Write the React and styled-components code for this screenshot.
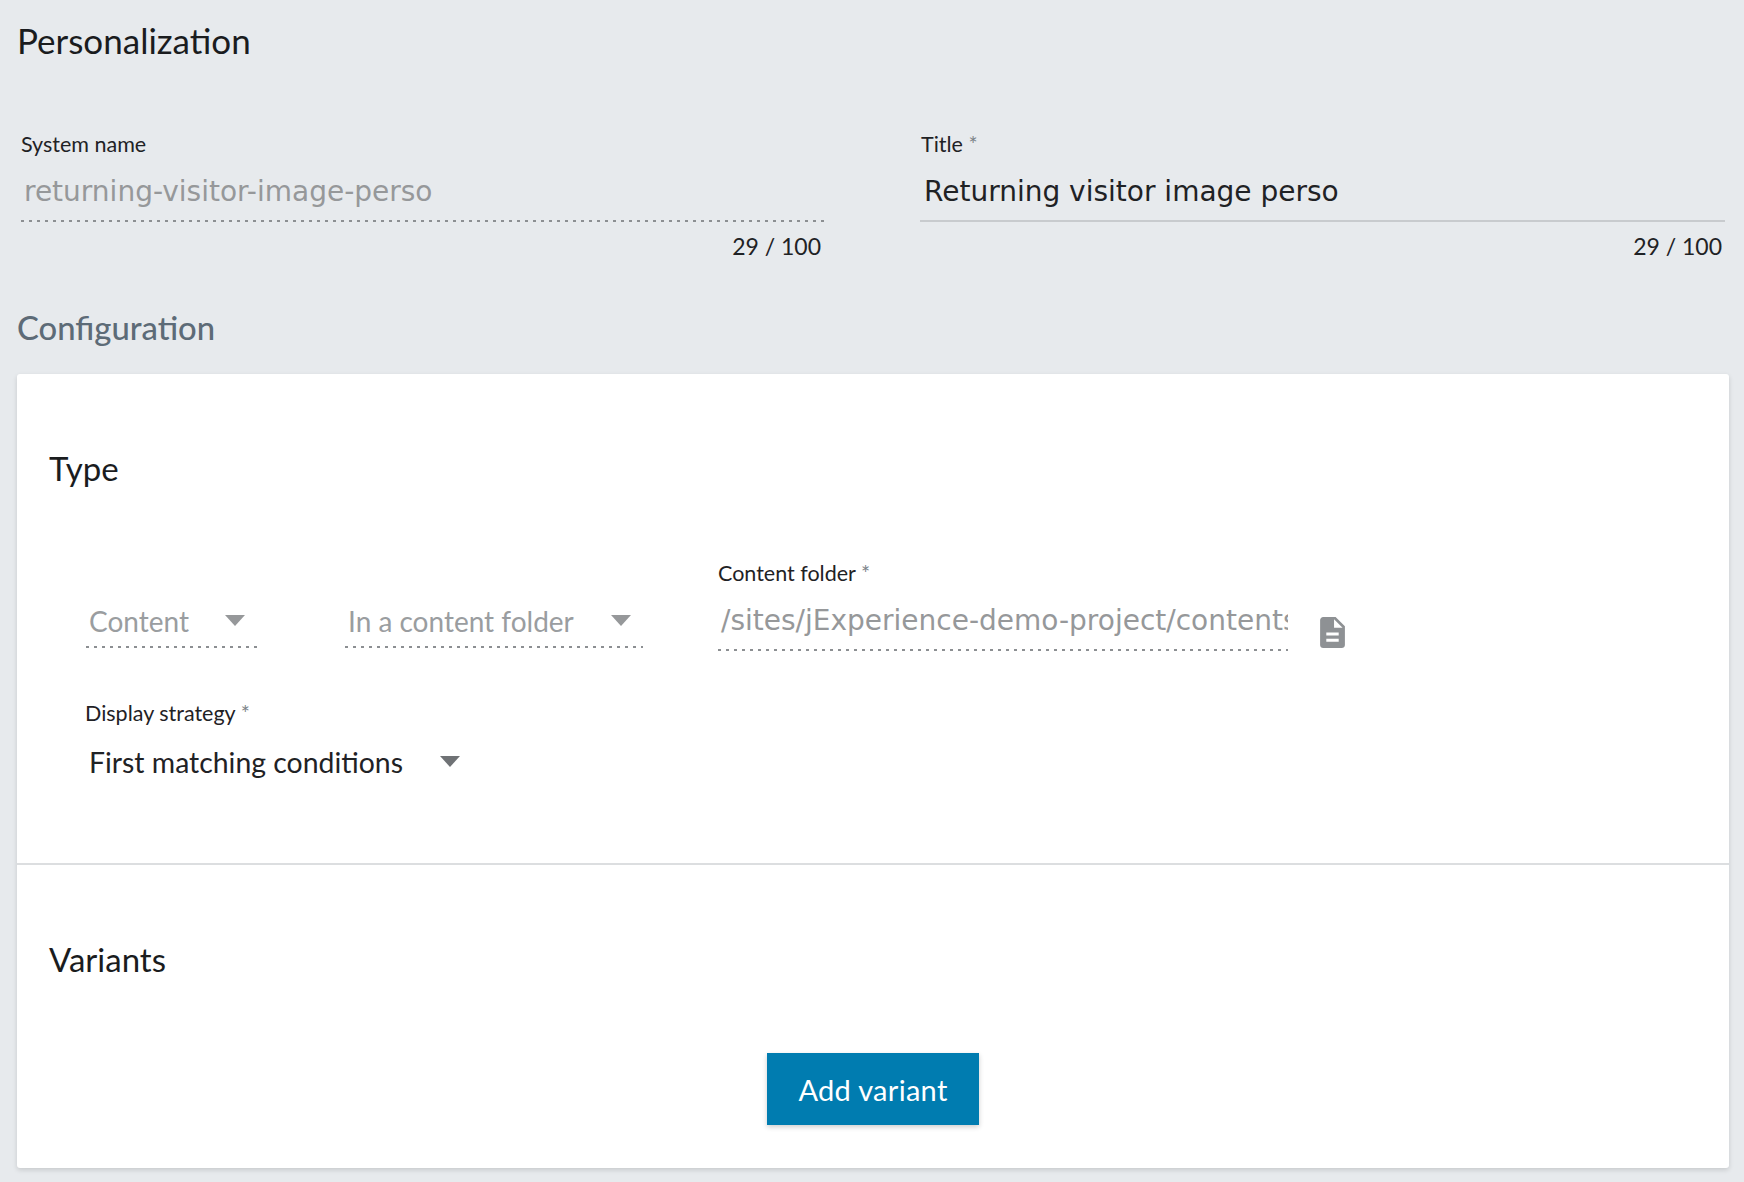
import React from 'react';
import styled, { createGlobalStyle, css } from 'styled-components';

const GlobalStyle = createGlobalStyle`
  html, body {
    margin: 0;
    padding: 0;
    background: #e7eaed;
  }
  body {
    font-family: Lato, "Open Sans", sans-serif;
    color: #1f2225;
  }
`;

const dottedLine = css`
  background-image: linear-gradient(to right, #8c8f92 3px, transparent 3px);
  background-size: 8px 2px;
  background-repeat: repeat-x;
  background-position: 1px bottom;
`;

const solidLine = css`
  background-image: linear-gradient(#c8cbce, #c8cbce);
  background-size: 100% 2px;
  background-repeat: no-repeat;
  background-position: left bottom;
`;

const Page = styled.div`
  width: 1744px;
  height: 1182px;
  box-sizing: border-box;
  padding: 0 15px 14px 17px;
  display: flex;
  flex-direction: column;
  overflow: hidden;
`;

const PageTitle = styled.h1`
  margin: 0;
  height: 81px;
  line-height: 81px;
  font-size: 35px;
  font-weight: 400;
  color: #1a1c1e;
`;

const FieldRow = styled.div`
  display: grid;
  grid-template-columns: 804px 805px;
  column-gap: 96px;
  padding: 50px 0 0 3px;
`;

const Field = styled.div`
  display: flex;
  flex-direction: column;
`;

const Label = styled.label`
  display: block;
  height: 27px;
  line-height: 27px;
  padding-left: 1px;
  font-size: 21.5px;
  color: #1f2225;
`;

const Star = styled.span`
  color: #7b8288;
`;

const TextValue = styled.div`
  height: 64px;
  box-sizing: border-box;
  padding: 4px 0 2px 4px;
  line-height: 60px;
  font-family: "DejaVu Sans", sans-serif;
  font-size: 28px;
  white-space: nowrap;
  overflow: hidden;
  color: ${({ $disabled }) => ($disabled ? '#96989a' : '#1f2225')};
  ${({ $disabled }) => ($disabled ? dottedLine : solidLine)}
`;

const Counter = styled.div`
  height: 48px;
  line-height: 48px;
  padding-right: 3px;
  text-align: right;
  font-size: 23px;
  color: #1f2225;
`;

const SectionTitle = styled.h2`
  margin: 0;
  height: 104px;
  box-sizing: border-box;
  padding-top: 13px;
  line-height: 90px;
  font-size: 32.8px;
  font-weight: 500;
  color: #5d6b77;
`;

const Card = styled.section`
  flex: 1;
  background: #fff;
  border-radius: 3px;
  box-shadow: 0 2px 5px rgba(0, 0, 0, 0.14);
  display: flex;
  flex-direction: column;
`;

const TypeBlock = styled.div`
  height: 491px;
  box-sizing: border-box;
  padding: 61px 32px 0;
  border-bottom: 2px solid #dcdee0;
`;

const BlockTitle = styled.h3`
  margin: 0;
  height: 66px;
  line-height: 66px;
  font-size: 33px;
  font-weight: 400;
  color: #1a1c1e;
`;

const ControlRow = styled.div`
  display: flex;
  align-items: flex-start;
  padding: 60px 0 0 36px;
`;

const Dropdown = styled.div`
  width: ${({ $width }) => $width}px;
  margin-right: ${({ $gap }) => $gap || 0}px;
  box-sizing: border-box;
  display: flex;
  align-items: center;
  justify-content: space-between;
  height: 50px;
  padding: 0 12px 4px 4px;
  font-size: 28px;
  color: ${({ $disabled }) => ($disabled ? '#9a9da0' : '#1f2225')};
  ${({ $disabled }) => $disabled && dottedLine}
`;

const StrategyDropdown = styled(Dropdown)`
  height: 74px;
  padding-left: 5px;
  font-size: 28.4px;
`;

const Caret = styled.span`
  width: 0;
  height: 0;
  border-left: 10px solid transparent;
  border-right: 10px solid transparent;
  border-top: 11px solid ${({ $disabled }) => ($disabled ? '#96989a' : '#6f7275')};
  margin-bottom: 2px;
`;

const DisabledColumn = styled.div`
  display: flex;
  flex-direction: column;
  padding-top: 37px;
`;

const FolderColumn = styled.div`
  display: flex;
  align-items: flex-end;
`;

const FolderField = styled.div`
  width: 571px;
  margin-top: -1px;
`;

const DocIcon = styled.svg`
  width: 25px;
  height: 31px;
  margin: 0 0 3px 32px;
  fill: #8e9194;
`;

const StrategyRow = styled.div`
  padding: 49px 0 0 35px;
  width: 387px;
`;

const VariantsBlock = styled.div`
  flex: 1;
  padding: 61px 32px 0;
  display: flex;
  flex-direction: column;
`;

const ButtonRow = styled.div`
  display: flex;
  justify-content: center;
  padding-top: 61px;
`;

const AddButton = styled.button`
  width: 212px;
  height: 72px;
  border: 0;
  border-radius: 0;
  background: #007cb0;
  color: #fff;
  font-family: Lato, sans-serif;
  font-size: 29px;
  letter-spacing: 0.3px;
  box-shadow: 0 2px 5px rgba(0, 0, 0, 0.2);
`;

export default function App() {
  return (
    <>
      <GlobalStyle />
      <Page>
        <PageTitle>Personalization</PageTitle>
        <FieldRow>
          <Field>
            <Label>System name</Label>
            <TextValue $disabled>returning-visitor-image-perso</TextValue>
            <Counter>29 / 100</Counter>
          </Field>
          <Field>
            <Label>Title <Star>*</Star></Label>
            <TextValue>Returning visitor image perso</TextValue>
            <Counter>29 / 100</Counter>
          </Field>
        </FieldRow>
        <SectionTitle>Configuration</SectionTitle>
        <Card>
          <TypeBlock>
            <BlockTitle>Type</BlockTitle>
            <ControlRow>
              <DisabledColumn>
                <Dropdown $disabled $width={172} $gap={87}>
                  Content
                  <Caret $disabled />
                </Dropdown>
              </DisabledColumn>
              <DisabledColumn>
                <Dropdown $disabled $width={299} $gap={74}>
                  In a content folder
                  <Caret $disabled />
                </Dropdown>
              </DisabledColumn>
              <FolderColumn>
                <FolderField>
                  <Label>Content folder <Star>*</Star></Label>
                  <TextValue $disabled>/sites/jExperience-demo-project/contents</TextValue>
                </FolderField>
                <DocIcon viewBox="4 2 16 20">
                  <path d="M14 2H6c-1.100 0-1.990.9-1.990 2L4 20c0 1.100.89 2 1.990 2H18c1.100 0 2-.9 2-2V8l-6-6zm2 16H8v-2h8v2zm0-4H8v-2h8v2zm-3-5V3.500L18.500 9H13z" />
                </DocIcon>
              </FolderColumn>
            </ControlRow>
            <StrategyRow>
              <Label>Display strategy <Star>*</Star></Label>
              <StrategyDropdown $width={388}>
                First matching conditions
                <Caret />
              </StrategyDropdown>
            </StrategyRow>
          </TypeBlock>
          <VariantsBlock>
            <BlockTitle>Variants</BlockTitle>
            <ButtonRow>
              <AddButton>Add variant</AddButton>
            </ButtonRow>
          </VariantsBlock>
        </Card>
      </Page>
    </>
  );
}
